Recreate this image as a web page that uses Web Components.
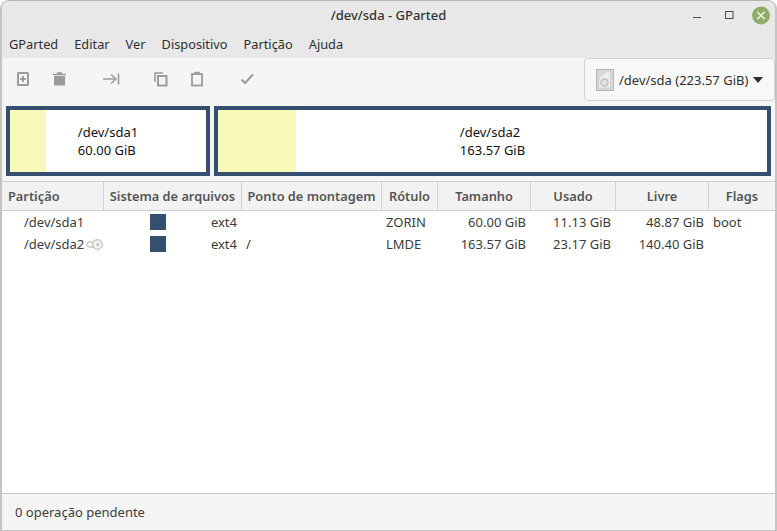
<!DOCTYPE html>
<html lang="pt">
<head>
<meta charset="utf-8">
<title>/dev/sda - GParted</title>
<style>
  html, body { margin: 0; height: 100%; background: #fff; }
  body { font: 13px "Noto Sans", "Open Sans", sans-serif; color: #3c3c3c; }
</style>
</head>
<body>
<gp-window>
  <gp-titlebar>/dev/sda - GParted</gp-titlebar>
  <gp-menubar items="GParted,Editar,Ver,Dispositivo,Partição,Ajuda"></gp-menubar>
  <gp-top>
    <gp-toolbar></gp-toolbar>
    <gp-combo>/dev/sda (223.57 GiB)</gp-combo>
  </gp-top>
  <gp-diskmap>
    <gp-partition style="width:204px" used="36" name="/dev/sda1" size="60.00 GiB"></gp-partition>
    <gp-partition style="flex:1" used="78" name="/dev/sda2" size="163.57 GiB"></gp-partition>
  </gp-diskmap>
  <gp-table></gp-table>
  <gp-statusbar>0 operação pendente</gp-statusbar>
</gp-window>

<script>
class GpWindow extends HTMLElement {
  constructor() {
    super();
    this.attachShadow({ mode: 'open' });
    this.shadowRoot.innerHTML = `
      <style>
        :host {
          display: flex;
          flex-direction: column;
          box-sizing: border-box;
          height: 531px;
          background: #f5f5f5;
          border: 2px solid #c4c4c4;
          border-top: 1px solid #b4b4b4;
          border-bottom: 1px solid #c4c4c4;
          border-radius: 9px 9px 0 0;
          overflow: hidden;
        }
      </style>
      <slot></slot>
    `;
  }
}

class GpTitlebar extends HTMLElement {
  constructor() {
    super();
    this.attachShadow({ mode: 'open' });
    this.shadowRoot.innerHTML = `
      <style>
        :host {
          display: flex;
          align-items: center;
          justify-content: center;
          position: relative;
          box-sizing: border-box;
          height: 30px;
          padding-bottom: 2px;
          background: #e8e8e8;
          font-size: 13px;
          font-weight: 500;
          color: #333;
        }
        .controls {
          position: absolute;
          right: 0;
          top: 0;
        }
        svg { display: block; }
      </style>
      <span class="title"><slot></slot></span>
      <svg class="controls" width="90" height="30" viewBox="0 0 90 30">
        <path d="M8 16.500h8" stroke="#4a4a4a" stroke-width="1" fill="none"/>
        <rect x="40.500" y="10.500" width="7.500" height="7" stroke="#4a4a4a" stroke-width="1" fill="none"/>
        <circle cx="76" cy="14.500" r="9" fill="#8fad68"/>
        <path d="M72.200 10.700l7.600 7.600M79.800 10.700l-7.600 7.600" stroke="#eef3e6" stroke-width="1.500" fill="none"/>
      </svg>
    `;
  }
}

class GpMenubar extends HTMLElement {
  constructor() {
    super();
    this.attachShadow({ mode: 'open' });
    const items = this.getAttribute('items').split(',').map(t => `<span>${t}</span>`).join('');
    this.shadowRoot.innerHTML = `
      <style>
        :host {
          display: flex;
          gap: 16px;
          align-items: center;
          box-sizing: border-box;
          height: 27px;
          padding: 0 0 2px 7px;
          background: #e8e8e8;
          font-size: 12.800px;
          color: #303030;
        }
      </style>
      ${items}
    `;
  }
}

class GpTop extends HTMLElement {
  constructor() {
    super();
    this.attachShadow({ mode: 'open' });
    this.shadowRoot.innerHTML = `
      <style>
        :host {
          display: flex;
          justify-content: space-between;
          height: 48px;
          background: #f5f5f5;
        }
      </style>
      <slot></slot>
    `;
  }
}

class GpToolbar extends HTMLElement {
  constructor() {
    super();
    this.attachShadow({ mode: 'open' });
    this.shadowRoot.innerHTML = `
      <style>
        :host { display: block; position: relative; width: 280px; }
        svg { display: block; }
      </style>
      <svg width="280" height="48" viewBox="2 58 280 48" fill="none" stroke="#9b9b9b" stroke-width="2">
        <!-- new -->
        <rect x="18" y="73" width="10" height="12" rx="0.500"/>
        <path d="M23 76v6M20 79h6" stroke="#8a8a8a" stroke-width="1.600"/>
        <!-- delete -->
        <path d="M53 74.500h13M57 73h5" stroke-width="1.600"/>
        <path d="M54 76h11v9.500h-11z" fill="#9b9b9b" stroke="none"/>
        <!-- resize/move -->
        <path d="M103 79h13M111 74.500l5 4.500-5 4.500" stroke-width="1.500"/>
        <path d="M118.500 73.500v11" stroke-width="1.600"/>
        <!-- copy -->
        <path d="M155 82v-9h8" stroke-width="1.600"/>
        <rect x="158" y="76" width="8.500" height="9.500"/>
        <!-- paste -->
        <rect x="192" y="74" width="10" height="11.500" stroke-width="1.800"/>
        <path d="M195 74v-1.500h4v1.500" stroke-width="1.500"/>
        <!-- apply -->
        <path d="M241.500 79.500l3.500 3.500 8-8.500"/>
      </svg>
    `;
  }
}

class GpCombo extends HTMLElement {
  constructor() {
    super();
    this.attachShadow({ mode: 'open' });
    this.shadowRoot.innerHTML = `
      <style>
        :host {
          display: flex;
          align-items: center;
          box-sizing: border-box;
          align-self: flex-start;
          width: 191px;
          height: 43px;
          padding-left: 11px;
          gap: 5px;
          background: #f8f8f8;
          border: 1px solid #d2d2d2;
          border-radius: 4px;
          font-size: 13px;
          color: #303030;
          white-space: nowrap;
        }
        .caret {
          width: 0;
          height: 0;
          border-left: 5.5px solid transparent;
          border-right: 5.5px solid transparent;
          border-top: 6px solid #2e2e2e;
        }
        svg { flex: none; }
      </style>
      <svg width="18" height="22" viewBox="0 0 18 22">
        <rect x="0.500" y="0.500" width="17" height="21" fill="#d8d8d8" stroke="#b4b4b4"/>
        <path d="M2.500 11C3.500 7 8 3 14.500 2v17H2.500z" fill="#ececec" stroke="#c6c6c6" stroke-width="0.600"/>
        <circle cx="8.500" cy="13.500" r="3.500" fill="#e2e2e2" stroke="#bdbdbd" stroke-width="1.300"/>
      </svg>
      <span><slot></slot></span>
      <span class="caret"></span>
    `;
  }
}

class GpDiskmap extends HTMLElement {
  constructor() {
    super();
    this.attachShadow({ mode: 'open' });
    this.shadowRoot.innerHTML = `
      <style>
        :host {
          display: flex;
          gap: 4px;
          height: 70px;
          padding: 0 4px 5px 4px;
          background: #f5f5f5;
        }
      </style>
      <slot></slot>
    `;
  }
}

class GpPartition extends HTMLElement {
  constructor() {
    super();
    this.attachShadow({ mode: 'open' });
    this.shadowRoot.innerHTML = `
      <style>
        :host {
          display: flex;
          box-sizing: border-box;
          height: 70px;
          border: 4px solid #34506e;
          background: #fff;
          font-size: 13px;
          line-height: 18px;
          color: #111;
        }
        .used { background: #f8f8b8; width: ${this.getAttribute('used')}px; flex: none; }
        .label {
          flex: 1;
          display: flex;
          justify-content: center;
          align-items: center;
          margin-left: -${this.getAttribute('used')}px;
          position: relative;
        }
        .label div { white-space: nowrap; }
      </style>
      <div class="used"></div>
      <div class="label"><div>${this.getAttribute('name')}<br>${this.getAttribute('size')}</div></div>
    `;
  }
}

class GpTable extends HTMLElement {
  constructor() {
    super();
    this.attachShadow({ mode: 'open' });
    const heads = [
      ['Partição', 'left'], ['Sistema de arquivos', 'center'], ['Ponto de montagem', 'center'],
      ['Rótulo', 'center'], ['Tamanho', 'center'], ['Usado', 'center'], ['Livre', 'center'], ['Flags', 'center']
    ];
    const rows = [
      { name: '/dev/sda1', fs: 'ext4', mount: '', label: 'ZORIN', size: '60.00 GiB', used: '11.13 GiB', free: '48.87 GiB', flags: 'boot' },
      { name: '/dev/sda2', key: true, fs: 'ext4', mount: '/', label: 'LMDE', size: '163.57 GiB', used: '23.17 GiB', free: '140.40 GiB', flags: '' }
    ];
    const keyIcon = `<svg class="key" width="17" height="11" viewBox="0 0 17 11" fill="none" stroke="#aeaeae">
      <path d="M8 3H2.500L0.500 5.500l2 2.500H8"/>
      <circle cx="11.500" cy="5.500" r="4.800" fill="#f4f4f4"/>
      <circle cx="11.800" cy="5.500" r="1.600" fill="#c0c0c0" stroke="none"/></svg>`;
    this.shadowRoot.innerHTML = `
      <style>
        :host {
          display: flex;
          flex-direction: column;
          flex: 1;
          background: #fff;
          font-size: 13px;
          color: #3c3c3c;
          border-top: 1px solid #d0d0d0;
          min-height: 0;
        }
        .grid, .head {
          display: grid;
          grid-template-columns: 102px 138px 140px 56px 93px 85px 93px 1fr;
        }
        .head {
          height: 28px;
          background: #f2f2f2;
          border-bottom: 1px solid #cfcfcf;
          font-weight: 600;
          font-size: 12.800px;
          color: #555;
        }
        .head span {
          display: flex;
          align-items: center;
          justify-content: center;
          border-right: 1px solid #d2d2d2;
          white-space: nowrap;
          overflow: hidden;
        }
        .head span:last-child { border-right: 0; }
        .head span.left { justify-content: flex-start; padding-left: 6px; }
        .row { height: 22px; }
        .row > span { display: flex; align-items: center; white-space: nowrap; }
        .name { padding-left: 22px; gap: 2px; }
        .fs { position: relative; justify-content: flex-end; padding-right: 5px; }
        .swatch { position: absolute; left: 46px; top: 3px; width: 16px; height: 16px; background: #34506e; }
        .mount { padding-left: 4px; }
        .lbl { padding-left: 4px; }
        .num { justify-content: flex-end; padding-right: 5px; }
        .flags { padding-left: 4px; }
        svg.key { flex: none; }
      </style>
      <div class="head">
        ${heads.map(h => `<span class="${h[1]}">${h[0]}</span>`).join('')}
      </div>
      ${rows.map(r => `
        <div class="grid row">
          <span class="name">${r.name}${r.key ? keyIcon : ''}</span>
          <span class="fs"><i class="swatch"></i>${r.fs}</span>
          <span class="mount">${r.mount}</span>
          <span class="lbl">${r.label}</span>
          <span class="num">${r.size}</span>
          <span class="num">${r.used}</span>
          <span class="num">${r.free}</span>
          <span class="flags">${r.flags}</span>
        </div>
      `).join('')}
    `;
  }
}

class GpStatusbar extends HTMLElement {
  constructor() {
    super();
    this.attachShadow({ mode: 'open' });
    this.shadowRoot.innerHTML = `
      <style>
        :host {
          display: flex;
          align-items: center;
          height: 36px;
          padding-left: 13px;
          background: #f5f5f5;
          border-top: 1px solid #c8c8c8;
          font-size: 13px;
          color: #3c3c3c;
        }
      </style>
      <slot></slot>
    `;
  }
}

customElements.define('gp-window', GpWindow);
customElements.define('gp-titlebar', GpTitlebar);
customElements.define('gp-menubar', GpMenubar);
customElements.define('gp-top', GpTop);
customElements.define('gp-toolbar', GpToolbar);
customElements.define('gp-combo', GpCombo);
customElements.define('gp-diskmap', GpDiskmap);
customElements.define('gp-partition', GpPartition);
customElements.define('gp-table', GpTable);
customElements.define('gp-statusbar', GpStatusbar);
</script>
</body>
</html>
